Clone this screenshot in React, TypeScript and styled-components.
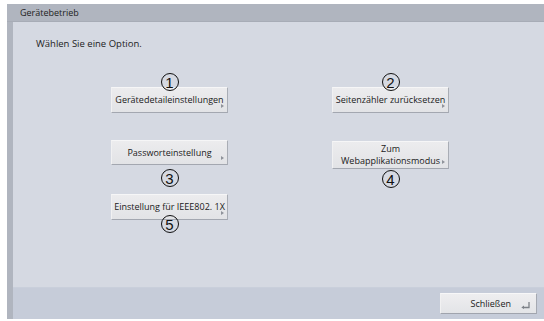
import styled, { createGlobalStyle } from "styled-components";

const GlobalStyle = createGlobalStyle`
  html, body {
    margin: 0;
    padding: 0;
    background: #ffffff;
  }
  body {
    font-family: "Open Sans", "Noto Sans", "Liberation Sans", sans-serif;
    color: #1a1a1a;
  }
`;

const Screen = styled.div`
  width: 544px;
  height: 321px;
  box-sizing: border-box;
  padding: 4px 0 2px 7px;
  display: flex;
`;

const Frame = styled.div`
  flex: 1;
  display: flex;
  flex-direction: column;
  background: #b0b5bf;
`;

const TitleBar = styled.div`
  height: 17px;
  padding-left: 13px;
  display: flex;
  align-items: center;
  font-size: 9px;
  color: #222;
  border-bottom: 1px solid #a7acb6;
`;

const Body = styled.div`
  flex: 1;
  display: flex;
  flex-direction: column;
  margin-left: 6px;
  background: #d5d9e2;
`;

const Content = styled.div`
  flex: 1;
  padding: 15px 0 0 23px;
`;

const Prompt = styled.div`
  font-size: 9.5px;
  line-height: 14px;
  color: #222;
`;

const Columns = styled.div`
  display: grid;
  grid-template-columns: 117px 117px;
  column-gap: 104px;
  margin: 22px 0 0 75px;
`;

const Column = styled.div`
  display: flex;
  flex-direction: column;
  align-items: center;
`;

const Marker = styled.div<{ $mt?: number }>`
  width: 18px;
  height: 18px;
  box-sizing: border-box;
  margin-top: ${(p) => p.$mt ?? 0}px;
  border: 1.2px solid #111;
  border-radius: 50%;
  display: flex;
  align-items: center;
  justify-content: center;
  font-family: "Liberation Sans", Arial, sans-serif;
  font-size: 15px;
  line-height: 1;
  color: #111;
  position: relative;
  z-index: 1;
`;

const OptionButton = styled.button<{ $mt?: number; $h?: number }>`
  position: relative;
  width: 117px;
  height: ${(p) => p.$h ?? 26}px;
  margin-top: ${(p) => p.$mt ?? 0}px;
  padding: 0 1px;
  box-sizing: border-box;
  background: linear-gradient(#ececee, #e2e3e6);
  border: none;
  border-top: 1px solid #f6f6f7;
  border-left: 1px solid #f1f1f2;
  border-right: 1px solid #a9adb5;
  border-bottom: 1px solid #a3a7b0;
  font-family: "Open Sans", "Noto Sans", sans-serif;
  font-size: 9px;
  line-height: 12px;
  color: #1a1a1a;
  text-align: center;
  white-space: nowrap;
`;

const Arrow = styled.span`
  position: absolute;
  right: 3px;
  bottom: 4px;
  width: 0;
  height: 0;
  border-top: 2.5px solid transparent;
  border-bottom: 2.5px solid transparent;
  border-left: 3px solid #8f939a;
`;

const Footer = styled.div`
  height: 31px;
  background: #c6ccd9;
  display: flex;
  align-items: center;
  justify-content: flex-end;
  padding-right: 7px;
  border-top: 1px solid #c9cfdb;
`;

const CloseButton = styled.button`
  width: 97px;
  height: 21px;
  box-sizing: border-box;
  display: flex;
  align-items: center;
  justify-content: flex-end;
  gap: 10px;
  padding: 0 6px 0 0;
  background: linear-gradient(#eeeef0, #e3e4e7);
  border: none;
  border-top: 1px solid #f7f7f8;
  border-left: 1px solid #f1f1f2;
  border-right: 1px solid #a5a9b2;
  border-bottom: 1px solid #a0a4ad;
  font-family: "Open Sans", "Noto Sans", sans-serif;
  font-size: 9px;
  color: #1a1a1a;
`;

function ReturnIcon() {
  return (
    <svg width="9" height="7" viewBox="0 0 9 7" style={{ marginTop: 4 }}>
      <path d="M8 0 V5.5 H2.5" fill="none" stroke="#7d8188" strokeWidth="1.3" />
      <polygon points="0.3,5.5 3,3.5 3,7" fill="#7d8188" />
    </svg>
  );
}

export default function App() {
  return (
    <>
      <GlobalStyle />
      <Screen>
        <Frame>
          <TitleBar>Gerätebetrieb</TitleBar>
          <Body>
            <Content>
              <Prompt>Wählen Sie eine Option.</Prompt>
              <Columns>
                <Column>
                  <Marker>1</Marker>
                  <OptionButton $mt={-4}>
                    Gerätedetaileinstellungen
                    <Arrow />
                  </OptionButton>
                  <OptionButton $mt={27} $h={25}>
                    Passworteinstellung
                    <Arrow />
                  </OptionButton>
                  <Marker $mt={4}>3</Marker>
                  <OptionButton $mt={7}>
                    Einstellung für IEEE802. 1X
                    <Arrow />
                  </OptionButton>
                  <Marker $mt={-5}>5</Marker>
                </Column>
                <Column>
                  <Marker>2</Marker>
                  <OptionButton $mt={-4}>
                    Seitenzähler zurücksetzen
                    <Arrow />
                  </OptionButton>
                  <OptionButton $mt={28} $h={28}>
                    Zum
                    <br />
                    Webapplikationsmodus
                    <Arrow />
                  </OptionButton>
                  <Marker $mt={1}>4</Marker>
                </Column>
              </Columns>
            </Content>
            <Footer>
              <CloseButton>
                Schließen
                <ReturnIcon />
              </CloseButton>
            </Footer>
          </Body>
        </Frame>
      </Screen>
    </>
  );
}
